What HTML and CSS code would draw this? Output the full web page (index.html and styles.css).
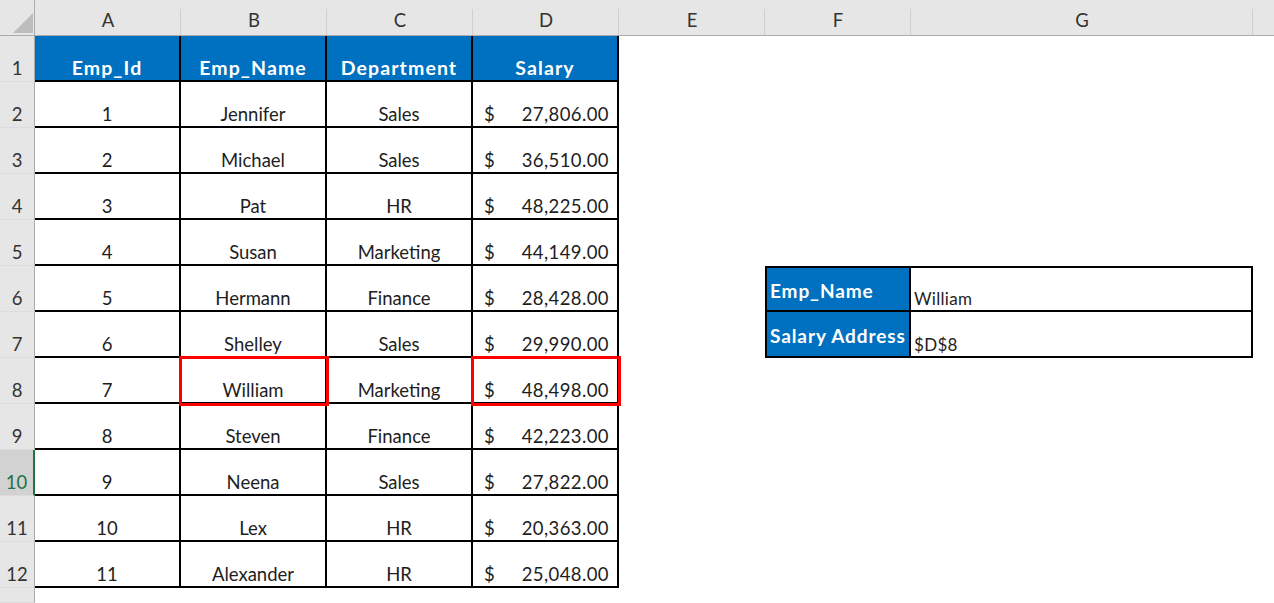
FILE: index.html
```html
<!DOCTYPE html>
<html>
<head>
<meta charset="utf-8">
<link rel="stylesheet" href="styles.css">
</head>
<body>
<div class="sheet">
  <!-- column headers -->
  <div class="corner"><svg width="35" height="36" viewBox="0 0 35 36"><polygon points="33,13 33,33 13,33" fill="#bdbdbd"/></svg></div>
  <div class="ch">A</div><div class="ch">B</div><div class="ch">C</div><div class="ch">D</div><div class="ch">E</div><div class="ch">F</div><div class="ch">G</div><div class="ch last"></div>

  <!-- row 1 -->
  <div class="rh">1</div>
  <div class="c t th">Emp_Id</div><div class="c t th">Emp_Name</div><div class="c t th">Department</div><div class="c t th">Salary</div>
  <div class="c"></div><div class="c"></div><div class="c"></div><div class="c"></div>

  <!-- row 2 -->
  <div class="rh">2</div>
  <div class="c t">1</div><div class="c t">Jennifer</div><div class="c t">Sales</div><div class="c t num"><span>$</span><span>27,806.00</span></div>
  <div class="c"></div><div class="c"></div><div class="c"></div><div class="c"></div>

  <!-- row 3 -->
  <div class="rh">3</div>
  <div class="c t">2</div><div class="c t">Michael</div><div class="c t">Sales</div><div class="c t num"><span>$</span><span>36,510.00</span></div>
  <div class="c"></div><div class="c"></div><div class="c"></div><div class="c"></div>

  <!-- row 4 -->
  <div class="rh">4</div>
  <div class="c t">3</div><div class="c t">Pat</div><div class="c t">HR</div><div class="c t num"><span>$</span><span>48,225.00</span></div>
  <div class="c"></div><div class="c"></div><div class="c"></div><div class="c"></div>

  <!-- row 5 -->
  <div class="rh">5</div>
  <div class="c t">4</div><div class="c t">Susan</div><div class="c t">Marketing</div><div class="c t num"><span>$</span><span>44,149.00</span></div>
  <div class="c"></div><div class="c"></div><div class="c"></div><div class="c"></div>

  <!-- row 6 -->
  <div class="rh">6</div>
  <div class="c t">5</div><div class="c t">Hermann</div><div class="c t">Finance</div><div class="c t num"><span>$</span><span>28,428.00</span></div>
  <div class="c"></div><div class="c lk top">Emp_Name</div><div class="c lv top">William</div><div class="c"></div>

  <!-- row 7 -->
  <div class="rh">7</div>
  <div class="c t">6</div><div class="c t">Shelley</div><div class="c t">Sales</div><div class="c t num"><span>$</span><span>29,990.00</span></div>
  <div class="c"></div><div class="c lk">Salary Address</div><div class="c lv">$D$8</div><div class="c"></div>

  <!-- row 8 -->
  <div class="rh">8</div>
  <div class="c t">7</div><div class="c t hl">William</div><div class="c t">Marketing</div><div class="c t num hl"><span>$</span><span>48,498.00</span></div>
  <div class="c"></div><div class="c"></div><div class="c"></div><div class="c"></div>

  <!-- row 9 -->
  <div class="rh">9</div>
  <div class="c t">8</div><div class="c t">Steven</div><div class="c t">Finance</div><div class="c t num"><span>$</span><span>42,223.00</span></div>
  <div class="c"></div><div class="c"></div><div class="c"></div><div class="c"></div>

  <!-- row 10 -->
  <div class="rh sel">10</div>
  <div class="c t">9</div><div class="c t">Neena</div><div class="c t">Sales</div><div class="c t num"><span>$</span><span>27,822.00</span></div>
  <div class="c"></div><div class="c"></div><div class="c"></div><div class="c"></div>

  <!-- row 11 -->
  <div class="rh">11</div>
  <div class="c t">10</div><div class="c t">Lex</div><div class="c t">HR</div><div class="c t num"><span>$</span><span>20,363.00</span></div>
  <div class="c"></div><div class="c"></div><div class="c"></div><div class="c"></div>

  <!-- row 12 -->
  <div class="rh">12</div>
  <div class="c t">11</div><div class="c t">Alexander</div><div class="c t">HR</div><div class="c t num"><span>$</span><span>25,048.00</span></div>
  <div class="c"></div><div class="c"></div><div class="c"></div><div class="c"></div>

  <!-- row 13 -->
  <div class="rh"></div>
  <div class="c"></div><div class="c"></div><div class="c"></div><div class="c"></div>
  <div class="c"></div><div class="c"></div><div class="c"></div><div class="c"></div>
</div>
</body>
</html>
```

FILE: styles.css
```css
html, body {
  margin: 0;
  padding: 0;
  background: #ffffff;
  overflow: hidden;
}

.sheet {
  display: grid;
  grid-template-columns: 35px repeat(6, 146px) 342px 1fr;
  grid-template-rows: 36px repeat(12, 46px) 1fr;
  width: 1274px;
  height: 603px;
  overflow: hidden;
  font-family: Lato, "Liberation Sans", sans-serif;
  font-size: 18.5px;
  color: #1e1e1e;
  line-height: 1;
}

.corner {
  background: #e6e6e6;
  border-right: 1px solid #ababab;
  border-bottom: 1px solid #ababab;
  box-sizing: border-box;
  overflow: hidden;
}

.corner svg {
  display: block;
}

.ch {
  position: relative;
  background: #e6e6e6;
  border-bottom: 1px solid #ababab;
  box-sizing: border-box;
  display: flex;
  align-items: flex-end;
  justify-content: center;
  padding-bottom: 6px;
  color: #333333;
}

.ch::after {
  content: "";
  position: absolute;
  right: 0;
  top: 9px;
  bottom: 0;
  width: 1px;
  background: #d0d0d0;
}

.ch.last::after {
  display: none;
}

.rh {
  background: #e6e6e6;
  border-right: 1px solid #ababab;
  border-bottom: 1px solid #dcdcdc;
  box-sizing: border-box;
  display: flex;
  align-items: flex-end;
  justify-content: center;
  padding-bottom: 4px;
  color: #333333;
}

.rh.sel {
  background: #d2d2d2;
  color: #217346;
  border-right: 2px solid #217346;
}

.c {
  box-sizing: border-box;
  display: flex;
  align-items: flex-end;
  justify-content: center;
  padding-bottom: 3px;
}

.t {
  border-right: 2px solid #000000;
  border-bottom: 2px solid #000000;
}

.th {
  background: #0070c0;
  color: #ffffff;
  font-weight: 700;
  font-size: 19.5px;
  letter-spacing: 1.1px;
  padding-bottom: 3px;
}

.num {
  justify-content: space-between;
  padding-left: 11px;
  padding-right: 8px;
  letter-spacing: 0.4px;
}

.hl {
  position: relative;
  z-index: 2;
  outline: 3px solid #ff0000;
  outline-offset: -1px;
}

.lk {
  background: #0070c0;
  color: #ffffff;
  font-weight: 700;
  font-size: 19px;
  letter-spacing: 0.9px;
  justify-content: flex-start;
  align-items: center;
  padding: 2px 0 0 3px;
  border-left: 2px solid #000000;
  border-right: 2px solid #000000;
  border-bottom: 2px solid #000000;
  white-space: nowrap;
}

.lv {
  justify-content: flex-start;
  padding-left: 3px;
  font-size: 17px;
  letter-spacing: 0.3px;
  border-right: 2px solid #000000;
  border-bottom: 2px solid #000000;
}

.top {
  border-top: 2px solid #000000;
}
```
